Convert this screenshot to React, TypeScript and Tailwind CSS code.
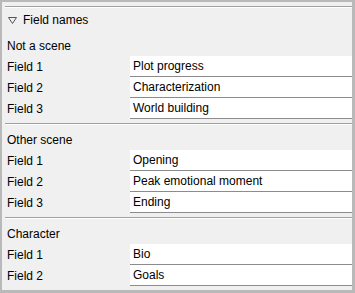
import React from "react";

const sections = [
  { title: "Not a scene", rows: [["Field 1", "Plot progress"], ["Field 2", "Characterization"], ["Field 3", "World building"]] },
  { title: "Other scene", rows: [["Field 1", "Opening"], ["Field 2", "Peak emotional moment"], ["Field 3", "Ending"]] },
  { title: "Character", rows: [["Field 1", "Bio"], ["Field 2", "Goals"]] },
];

function Sep() {
  return (
    <div className="ml-[3px]">
      <div className="h-px bg-[#a0a0a0]" />
      <div className="h-px bg-white" />
    </div>
  );
}

export default function App() {
  return (
    <div
      className="w-[355px] h-[293px] bg-[#b9b9b9] pt-[2px] pl-[2px] pr-[3px] pb-[3px] text-[12px] text-black overflow-hidden"
      style={{ fontFamily: '"Liberation Sans", Arial, sans-serif' }}
    >
      <div className="h-full bg-[#f0f0f0] pt-[4px] flex flex-col">
        <Sep />
        <div className="h-[24px] flex items-center pl-[6px] gap-[6px]">
          <svg width="9" height="7" viewBox="0 0 9 7" className="mt-[1px]">
            <polygon points="0.5,0.5 8.5,0.5 4.5,6.5" fill="none" stroke="#555" strokeWidth="1" />
          </svg>
          <span>Field names</span>
        </div>
        {sections.map((s, i) => (
          <div key={s.title} className="flex flex-col">
            {i > 0 && <div className="h-[4px]" />}
            {i > 0 && <Sep />}
            <div className={i === 0 ? "h-[4px]" : "h-[5px]"} />
            <div className="h-[20px] flex items-center pl-[5px]">{s.title}</div>
            {s.rows.map(([label, value]) => (
              <div key={label} className="h-[21px] flex">
                <div className="w-[128px] pl-[5px] flex items-center">{label}</div>
                <div className="flex-1 bg-white border-b border-[#8c8c8c] flex items-center pl-[3px]">{value}</div>
              </div>
            ))}
          </div>
        ))}
      </div>
    </div>
  );
}
